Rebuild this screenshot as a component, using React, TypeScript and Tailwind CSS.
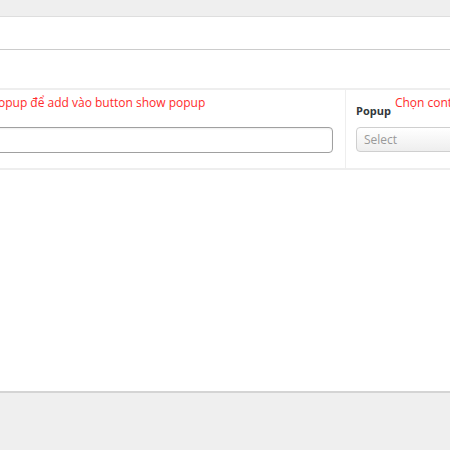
export default function App() {
  return (
    <div className="w-[450px] h-[450px] overflow-hidden bg-[#efefef] pt-4 font-['Open_Sans',sans-serif]">
      {/* panel */}
      <div className="h-[377px] bg-white border-t border-[#dedede] border-b-2 border-b-[#d4d4d4] flex flex-col">
        <div className="h-[33px] border-b border-[#cccccc]" />
        <div className="h-[40px] border-b-2 border-[#eeeeee]" />
        {/* field row */}
        <div className="flex h-[80px] border-b-2 border-[#eeeeee]">
          <div className="w-[346px] shrink-0 border-r border-[#eeeeee] pr-[12px] pt-[3px]">
            <div className="-ml-[42px] whitespace-nowrap text-[12px] leading-[20px] text-[#ff2b2b]">
              Chọn popup để add vào button show popup
            </div>
            <div className="mt-[14px] h-[26px] -ml-2 rounded-[4px] border border-[#a0a0a0] bg-white shadow-[inset_0_1px_2px_rgba(0,0,0,0.07)]" />
          </div>
          <div className="flex-1 pl-[10px] pt-[3px]">
            <div className="flex items-start whitespace-nowrap">
              <span className="mt-[10px] text-[11px] leading-[16px] font-bold text-[#32373c]">Popup</span>
              <span className="ml-[4px] text-[12px] leading-[20px] text-[#ff2b2b]">Chọn content popup</span>
            </div>
            <div className="mt-[8px] h-[25px] w-[120px] rounded-[4px] border border-[#cfcfcf] bg-gradient-to-b from-white to-[#eeeeee] pl-[7px] text-[12px] leading-[23px] text-[#999999]">
              Select
            </div>
          </div>
        </div>
      </div>
    </div>
  );
}
